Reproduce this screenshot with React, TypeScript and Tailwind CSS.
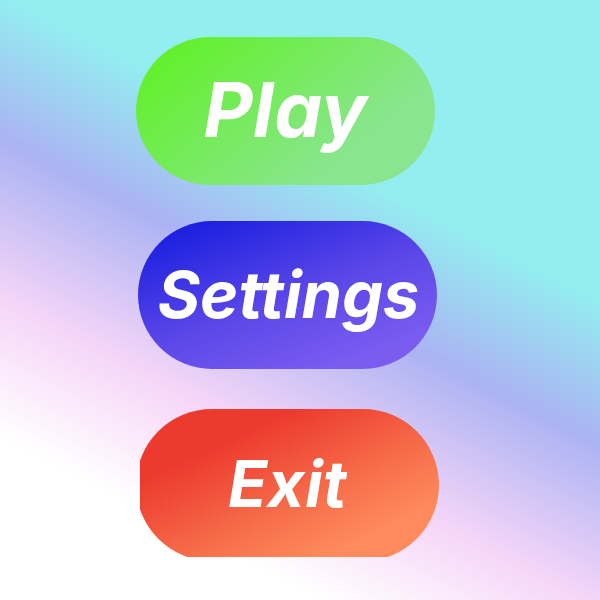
const font = { fontFamily: "Inter, 'Liberation Sans', sans-serif" };

export default function App() {
  return (
    <div className="h-[600px] w-full overflow-hidden bg-[linear-gradient(207deg,#93eef0_0%,#93eef0_33%,#abb3f3_49%,#f6d6f8_67%,#ffffff_82%)]">
      <div className="flex flex-col items-start pt-[37px]" style={font}>
        <button
          type="button"
          className="ml-[136px] flex h-[148px] w-[299px] items-center justify-center rounded-full bg-[linear-gradient(140deg,#63f02c_10%,#8ae590_75%)] text-[76px] font-bold italic text-white"
        >
          <span className="-mt-[4px] tracking-[0.5px]">Play</span>
        </button>

        <button
          type="button"
          className="ml-[138px] mt-[36px] flex h-[148px] w-[299px] items-center justify-center rounded-full bg-[linear-gradient(160deg,#1a1fdf_8%,#5a46e8_50%,#7a5cf0_85%)] text-[65px] font-bold italic text-white"
        >
          <span className="ml-[2px]">Settings</span>
        </button>

        {/* exit pill is clipped on its left and bottom */}
        <div className="ml-[140px] mt-[40px] h-[148px] w-[299px] overflow-hidden">
          <button
            type="button"
            className="-ml-[4px] flex h-[152px] w-[303px] items-center justify-center rounded-full bg-[linear-gradient(155deg,#ec3a2e_25%,#f7704c_60%,#ff8a5c_80%)] text-[64px] font-bold italic text-white"
          >
            <span className="-mt-[2px] tracking-[0.5px]">Exit</span>
          </button>
        </div>
      </div>
    </div>
  );
}
